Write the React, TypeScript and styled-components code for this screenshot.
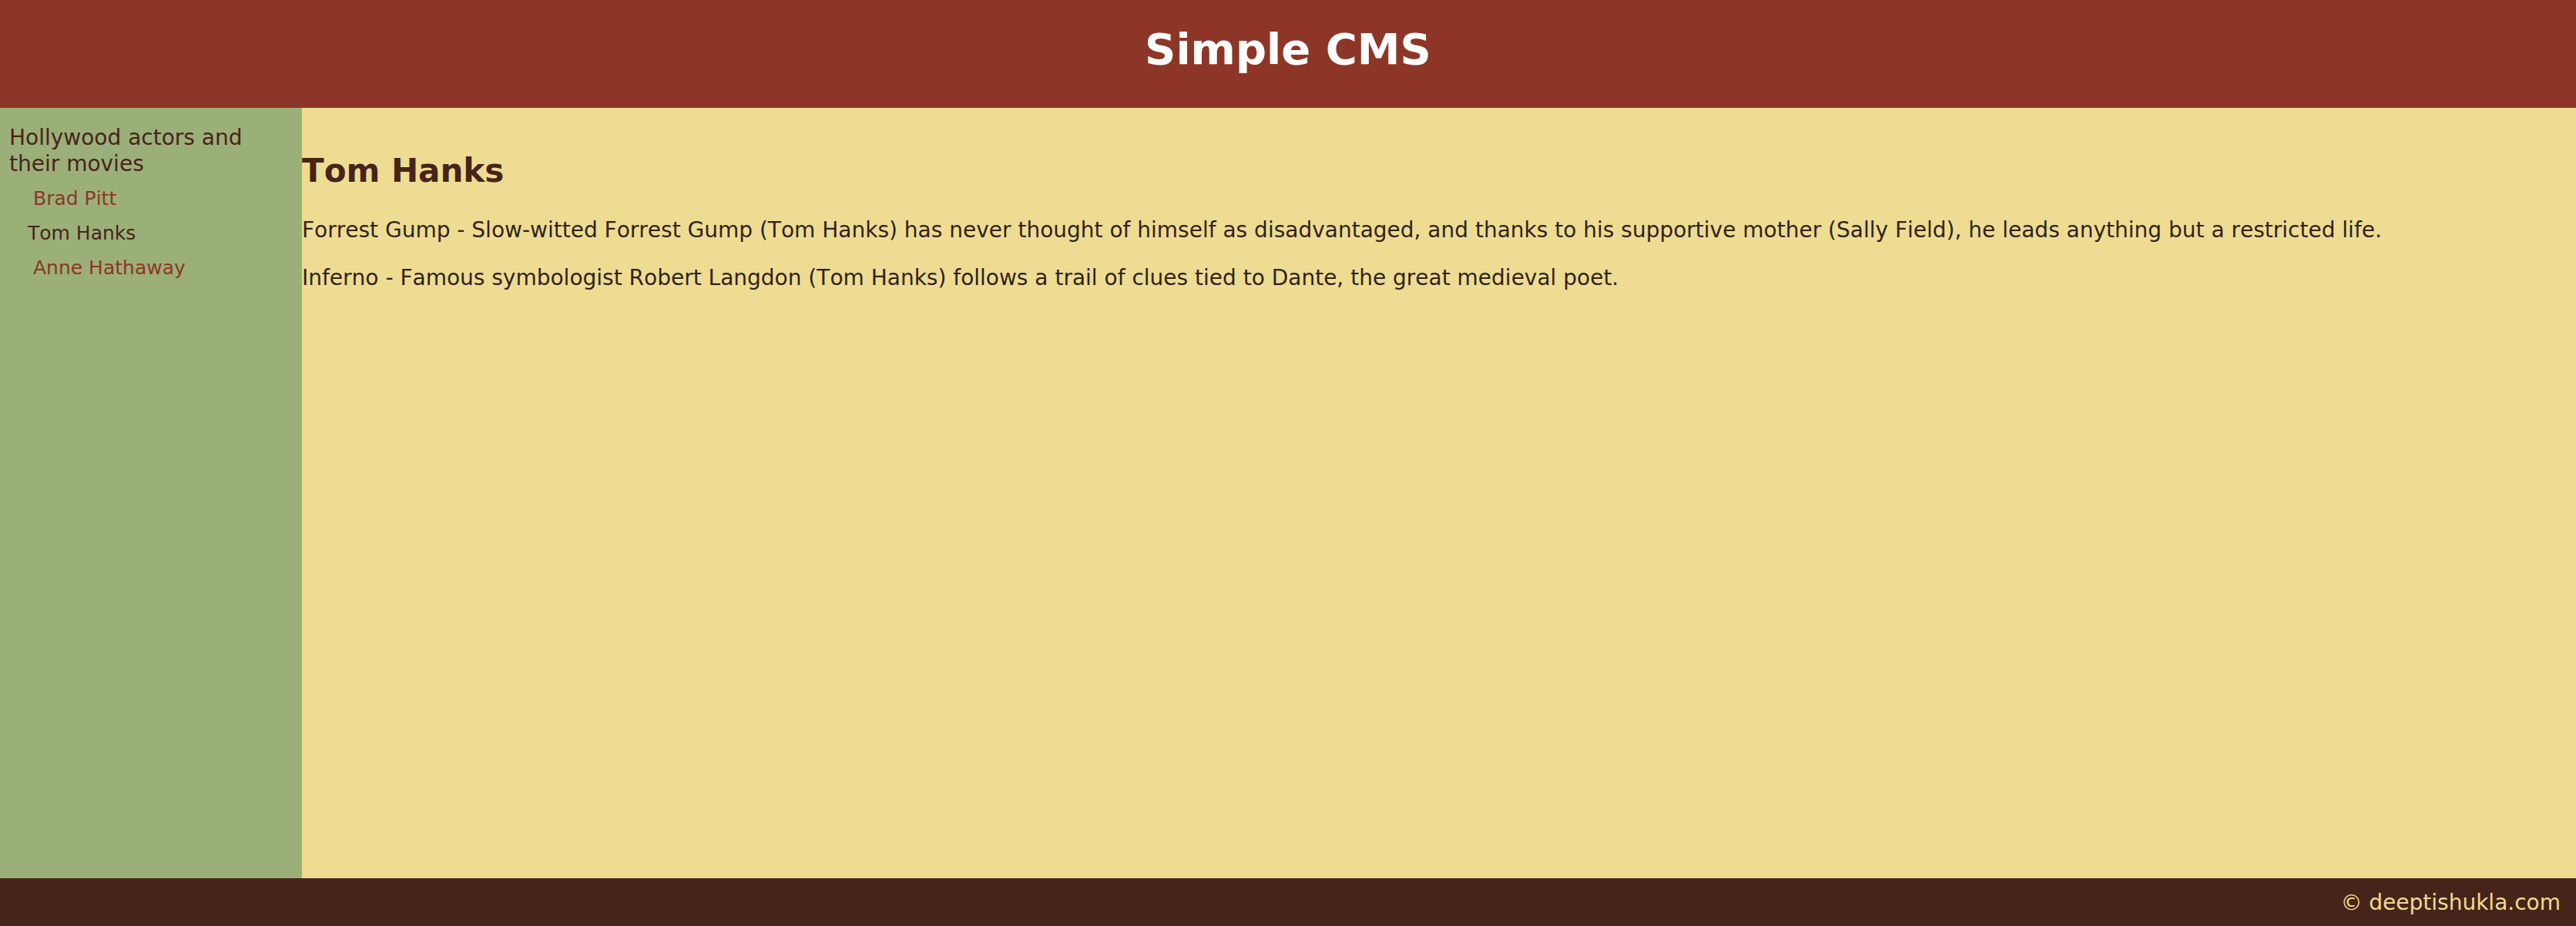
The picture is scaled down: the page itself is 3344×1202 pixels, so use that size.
import React from "react";
import styled, { createGlobalStyle } from "styled-components";

const color = {
  brick: "#8d3627",
  sage: "#9bb078",
  sand: "#eedc92",
  cocoa: "#47241a",
  ink: "#30231b",
};

const GlobalStyle = createGlobalStyle`
  *, *::before, *::after {
    box-sizing: border-box;
  }

  body {
    margin: 0;
    background: ${color.sand};
    color: ${color.ink};
    font-family: Verdana, "DejaVu Sans", sans-serif;
    font-size: 28px;
    font-kerning: none;
    line-height: 34px;
  }
`;

const Page = styled.div`
  display: flex;
  flex-direction: column;
  min-height: 100vh;
`;

const Header = styled.header`
  padding: 30px 20px 42px;
  background: ${color.brick};
  color: #ffffff;
  text-align: center;
`;

const SiteTitle = styled.h1`
  margin: 0;
  font-size: 56px;
  line-height: 68px;
`;

const Body = styled.div`
  display: flex;
  flex: 1;
`;

const Navigation = styled.nav`
  flex: 0 0 392px;
  padding: 22px 60px 22px 12px;
  background: ${color.sage};
  color: ${color.cocoa};
`;

const Plain = styled.ul`
  margin: 0;
  padding: 0;
  list-style: none;
`;

const Pages = styled(Plain)`
  display: flex;
  flex-direction: column;
  gap: 14px;
  padding: 12px 0 0 24px;
  font-size: 25px;
  line-height: 31px;
`;

const PageLink = styled.a<{ $current?: boolean }>`
  display: block;
  padding-left: ${(p) => (p.$current ? 0 : 7)}px;
  color: ${(p) => (p.$current ? color.cocoa : color.brick)};
  text-decoration: none;
`;

const Main = styled.main`
  flex: 1;
  min-width: 0;
  padding-top: 56px;
`;

const Heading = styled.h2`
  margin: 0 0 35px;
  color: ${color.cocoa};
  font-size: 42px;
  line-height: 51px;
`;

const Paragraph = styled.p`
  margin: 0 0 28px;
`;

const Footer = styled.footer`
  padding: 15px 20px 13px;
  background: ${color.cocoa};
  color: ${color.sand};
  text-align: right;
`;

const pages = ["Brad Pitt", "Tom Hanks", "Anne Hathaway"];
const currentPage = "Tom Hanks";

const movies = [
  "Forrest Gump - Slow-witted Forrest Gump (Tom Hanks) has never thought of himself as disadvantaged, and thanks to his supportive mother (Sally Field), he leads anything but a restricted life.",
  "Inferno - Famous symbologist Robert Langdon (Tom Hanks) follows a trail of clues tied to Dante, the great medieval poet.",
];

export default function App() {
  return (
    <>
      <GlobalStyle />
      <Page>
        <Header>
          <SiteTitle>Simple CMS</SiteTitle>
        </Header>
        <Body>
          <Navigation>
            <Plain>
              <li>
                Hollywood actors and their movies
                <Pages>
                  {pages.map((name) => (
                    <li key={name}>
                      <PageLink
                        href="#"
                        $current={name === currentPage}
                        aria-current={name === currentPage ? "page" : undefined}
                      >
                        {name}
                      </PageLink>
                    </li>
                  ))}
                </Pages>
              </li>
            </Plain>
          </Navigation>
          <Main>
            <Heading>{currentPage}</Heading>
            {movies.map((text) => (
              <Paragraph key={text}>{text}</Paragraph>
            ))}
          </Main>
        </Body>
        <Footer>© deeptishukla.com</Footer>
      </Page>
    </>
  );
}
